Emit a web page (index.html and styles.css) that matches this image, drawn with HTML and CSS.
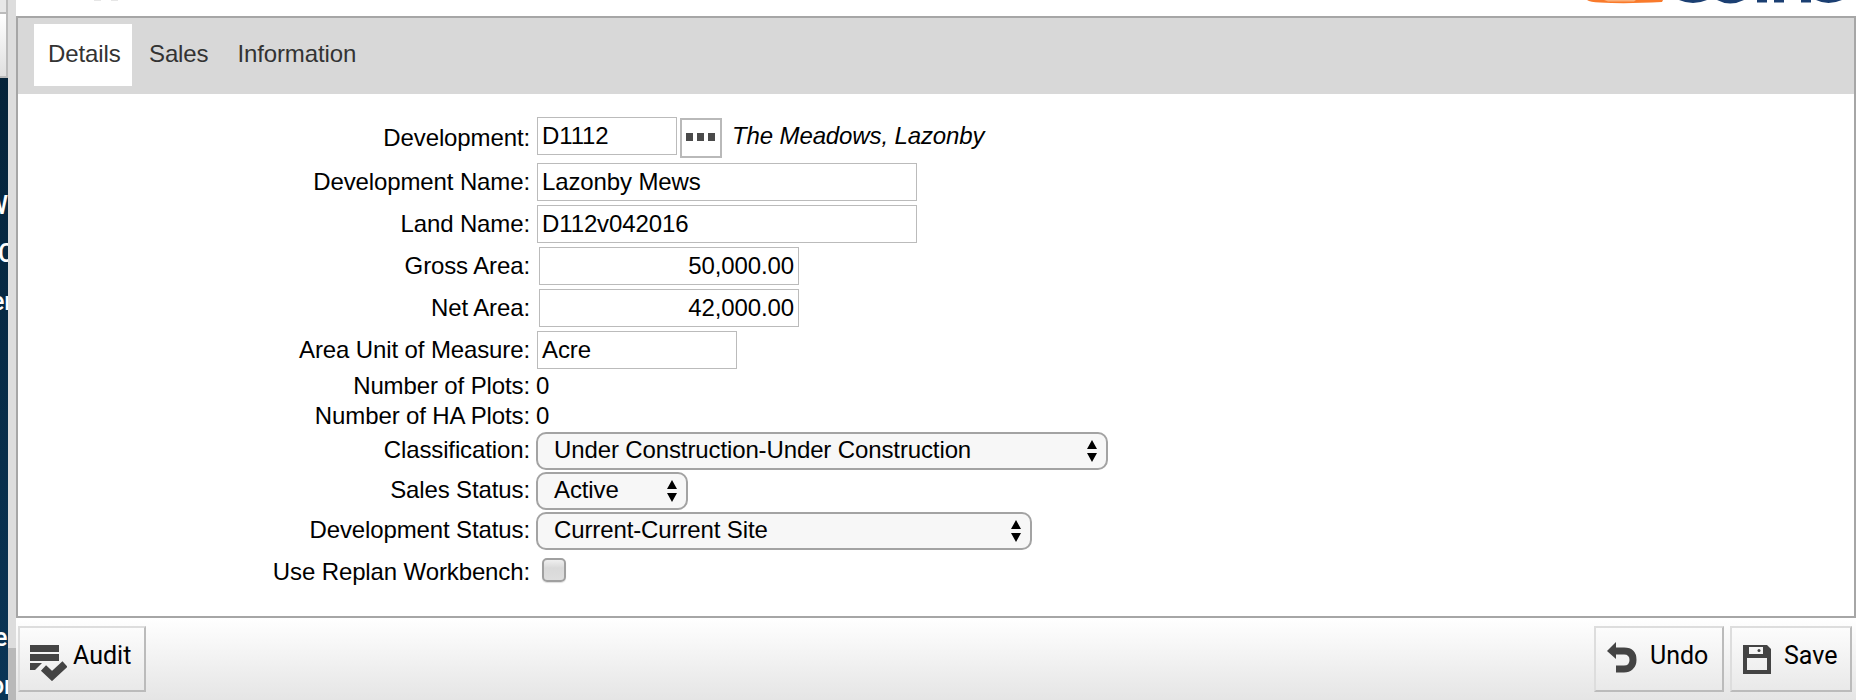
FILE: index.html
```html
<!DOCTYPE html>
<html lang="en">
<head>
<meta charset="utf-8">
<title>Development Details</title>
<link rel="stylesheet" href="styles.css">
</head>
<body>
<div class="app">
  <aside class="side">
    <div class="side-tab side-tab-short"></div>
    <div class="side-tab"></div>
    <nav class="side-menu">
      <span class="m1">W</span>
      <span class="m2">C</span>
      <span class="m3">er</span>
      <span class="m4">e</span>
      <span class="m5">or</span>
    </nav>
  </aside>
  <div class="splitter"><div class="splitter-thumb"></div></div>
  <main class="main">
    <header class="top">
      <div class="title-tail"><i></i><i></i></div>
      <svg class="logo" width="270" height="5" viewBox="0 0 270 5">
        <path d="M7 0H83L82 2Q45 4 20 2.5Q10 2 7 0Z" fill="#f97a2b"/>
        <path d="M24 0H56L54 1.5H28Z" fill="#fbb07a"/>
        <path d="M99 0H127Q113 6 99 0ZM137 0H164Q150 7 137 0ZM177 0H187V2.5H177ZM194 0H204V2.5H194ZM221 0H231V2.5H221ZM236 0H262Q248 6 236 0Z" fill="#1b3f72"/>
      </svg>
    </header>
    <section class="panel">
      <nav class="tabs">
        <a class="tab active">Details</a>
        <a class="tab">Sales</a>
        <a class="tab">Information</a>
      </nav>
      <form class="form">
        <div class="row row-first"><label class="label">Development:</label><div class="input w-code">D1112</div><div class="lookup"><i></i><i></i><i></i></div><em class="desc">The Meadows, Lazonby</em></div>
        <div class="row"><label class="label">Development Name:</label><div class="input w-name">Lazonby Mews</div></div>
        <div class="row"><label class="label">Land Name:</label><div class="input w-name">D112v042016</div></div>
        <div class="row"><label class="label">Gross Area:</label><div class="input number">50,000.00</div></div>
        <div class="row"><label class="label">Net Area:</label><div class="input number">42,000.00</div></div>
        <div class="row row-unit"><label class="label">Area Unit of Measure:</label><div class="input w-unit">Acre</div></div>
        <div class="row row-text"><label class="label">Number of Plots:</label><span>0</span></div>
        <div class="row row-text"><label class="label">Number of HA Plots:</label><span>0</span></div>
        <div class="row row-select"><label class="label">Classification:</label><div class="select w-class"><span>Under Construction-Under Construction</span><svg class="arrows" width="12" height="22" viewBox="0 0 12 22"><path d="M6 0L11 9H1ZM1 13H11L6 22Z"/></svg></div></div>
        <div class="row row-select"><label class="label">Sales Status:</label><div class="select w-sales"><span>Active</span><svg class="arrows" width="12" height="22" viewBox="0 0 12 22"><path d="M6 0L11 9H1ZM1 13H11L6 22Z"/></svg></div></div>
        <div class="row row-select"><label class="label">Development Status:</label><div class="select w-dev"><span>Current-Current Site</span><svg class="arrows" width="12" height="22" viewBox="0 0 12 22"><path d="M6 0L11 9H1ZM1 13H11L6 22Z"/></svg></div></div>
        <div class="row row-check"><label class="label">Use Replan Workbench:</label><div class="check"></div></div>
      </form>
    </section>
    <footer class="footer">
      <button class="btn btn-audit"><svg width="38" height="37" viewBox="0 0 38 37"><path d="M1 1H30V8H1ZM1 10H30V17H1ZM1 19H13L6 26H1Z"/><path d="M14.5 24L23 32L36 20" fill="none" stroke="#444" stroke-width="7.5"/></svg><span>Audit</span></button>
      <button class="btn btn-undo"><svg width="31" height="32" viewBox="0 0 31 32"><path d="M0 9L9 0V17Z"/><path d="M8 9H17C24 9 26 13 26 18C26 24 22 27 17 27H9" fill="none" stroke="#444" stroke-width="7"/></svg><span>Undo</span></button>
      <button class="btn btn-save"><svg width="30" height="31" viewBox="0 0 30 31"><path fill-rule="evenodd" d="M1 1H25L29 5V30H1ZM7 3V10H21V3ZM5 14V26H25V14Z"/><circle cx="17" cy="6.5" r="1.5"/></svg><span>Save</span></button>
    </footer>
  </main>
</div>
</body>
</html>
```
FILE: styles.css
```css
* { box-sizing: border-box; }
body { margin: 0; background: #fff; color: #000; font: 24px/28px "Liberation Sans", Arial, sans-serif; letter-spacing: -0.12px; overflow: hidden; }
.app { display: flex; width: 1856px; height: 700px; }

/* Collapsed sidebar */
.side { width: 8px; flex: none; display: flex; flex-direction: column; overflow: hidden; background: linear-gradient(#042136, #0a3556); }
.side-tab { height: 64px; flex: none; background: linear-gradient(#fff, #e0e0e0); border-right: 2px solid #bbb; border-bottom: 2px solid #bbb; }
.side-tab-short { height: 14px; background: #e8e8e8; }
.side-menu { display: flex; flex-direction: column; color: #fff; white-space: nowrap; font: 25px/28px Roboto, sans-serif; }
.m1 { margin: 114px 0 0 -14px; font-weight: 500; }
.m2 { margin: 20px 0 0 -2px; font-weight: 500; }
.m3 { margin: 20px 0 0 -9px; font-weight: 500; }
.m4 { margin: 308px 0 0 -6px; font-weight: 500; }
.m5 { margin: 20px 0 0 -10px; font-weight: 500; }
.splitter { width: 8px; flex: none; display: flex; align-items: flex-end; background: #ddd; }
.splitter-thumb { width: 8px; height: 52px; background: #b9b9b9; }

.main { width: 1840px; display: flex; flex-direction: column; }
.top { height: 16px; display: flex; justify-content: space-between; padding: 0 6px 0 78px; }
.title-tail { display: flex; gap: 10px; }
.title-tail i { width: 7px; height: 1px; background: #e6e6e6; }
.panel { height: 602px; border: 2px solid #a6a6a6; }
.tabs { display: flex; height: 76px; padding: 6px 16px; background: #d8d8d8; }
.tab { height: 62px; padding: 16px 14px 0; color: #333; }
.tab.active { width: 98px; margin-right: 3px; background: #fff; }
.tab:last-child { padding-left: 15px; }

/* Form */
.form { padding-top: 23px; }
.row { display: flex; align-items: flex-start; height: 42px; }
.label { width: 512px; margin-right: 7px; padding-top: 5px; text-align: right; flex: none; }
.row-first { height: 46px; }
.row-first .label { padding-top: 7px; }
.input { height: 38px; padding: 4px 4px 0; border: 1px solid #bbb; }
.w-code { width: 140px; }
.w-name { width: 380px; }
.w-unit { width: 200px; }
.number { width: 260px; margin-left: 2px; text-align: right; }
.lookup { display: flex; gap: 4px; width: 42px; height: 40px; margin: 1px 0 0 3px; padding: 13px 0 0 4px; border: 2px solid #b9b9b9; }
.lookup i { width: 7px; height: 8px; background: #4a4a4a; }
.desc { margin: 5px 0 0 10px; }
.row-unit { height: 41px; }
.row-text { height: 30px; }
.row-text .label, .row-check .label { padding-top: 0; }
.row-text .label { margin-right: 6px; }
.row-select { height: 40px; }
.row-select .label { padding-top: 4px; margin-right: 6px; }
.select { display: flex; justify-content: space-between; height: 38px; padding: 2px 8px 0 16px; border: 2px solid #a3a3a3; border-radius: 10px; background: #f7f7f7; }
.arrows { margin-top: 4px; }
.w-class { width: 572px; }
.w-sales { width: 152px; }
.w-dev { width: 496px; }
.row-check { padding-top: 6px; }
.check { width: 24px; height: 24px; margin-left: 5px; border: 2px solid #a0a0a0; border-radius: 5px; background: linear-gradient(#efefef, #d9d9d9 40%, #dedede); box-shadow: 0 1px 1px #ddd; }

/* Footer actions */
.footer { display: flex; height: 82px; padding: 8px 4px 0 2px; background: linear-gradient(#fff, #e5e5e5); }
.btn { display: flex; align-items: flex-start; height: 66px; padding: 0; border: 2px solid; border-color: #ddd #bbb #bbb #ddd; background: linear-gradient(#fcfcfc, #e9e9e9); color: #000; font: 25px/28px Roboto, sans-serif; }
.btn svg { fill: #444; flex: none; }
.btn span { margin-top: 14px; }
.btn-audit { width: 128px; }
.btn-audit svg { margin: 16px 6px 0 9px; }
.btn-undo { width: 130px; margin-left: auto; }
.btn-undo svg { margin: 14px 12px 0 11px; }
.btn-save { width: 122px; margin-left: 6px; }
.btn-save svg { margin: 16px 12px 0 10px; }
```
